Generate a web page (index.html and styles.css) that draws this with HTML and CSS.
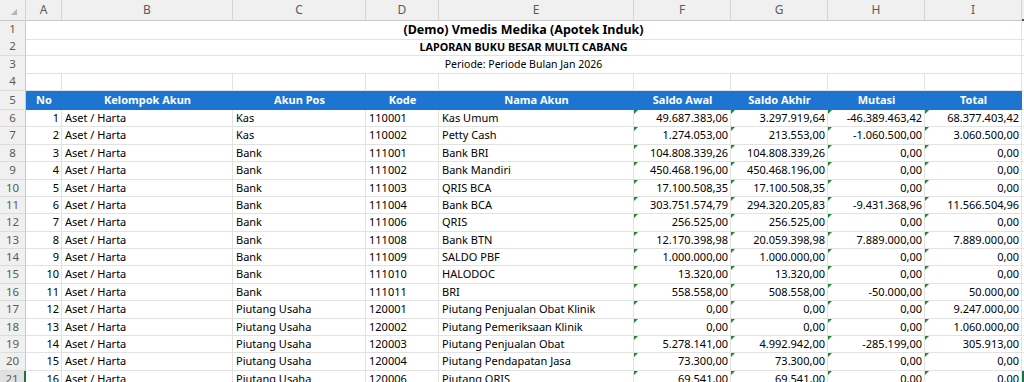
FILE: index.html
```html
<!DOCTYPE html>
<html>
<head>
<meta charset="utf-8">
<link rel="stylesheet" href="styles.css">
</head>
<body>
<div class="sheet">
  <div class="row colhead">
    <div class="corner"><svg width="8" height="8" viewBox="0 0 8 8"><polygon points="7,1 7,7 1,7" fill="#b4b4b4"/></svg></div>
    <div class="ch">A</div><div class="ch">B</div><div class="ch">C</div><div class="ch">D</div><div class="ch">E</div><div class="ch">F</div><div class="ch">G</div><div class="ch">H</div><div class="ch">I</div><div class="ch chj"></div>
  </div>

  <div class="row title"><div class="rh">1</div><div class="merged t1">(Demo) Vmedis Medika (Apotek Induk)</div><div class="c"></div></div>
  <div class="row title"><div class="rh">2</div><div class="merged t2">LAPORAN BUKU BESAR MULTI CABANG</div><div class="c"></div></div>
  <div class="row title"><div class="rh">3</div><div class="merged t3">Periode: Periode Bulan Jan 2026</div><div class="c"></div></div>
  <div class="row"><div class="rh">4</div><div class="c"></div><div class="c"></div><div class="c"></div><div class="c"></div><div class="c"></div><div class="c"></div><div class="c"></div><div class="c"></div><div class="c"></div><div class="c"></div></div>

  <div class="row thead">
    <div class="rh">5</div>
    <div class="th">No</div><div class="th">Kelompok Akun</div><div class="th">Akun Pos</div><div class="th">Kode</div><div class="th">Nama Akun</div><div class="th">Saldo Awal</div><div class="th">Saldo Akhir</div><div class="th">Mutasi</div><div class="th">Total</div><div class="c"></div>
  </div>

  <div class="row"><div class="rh">6</div><div class="c r">1</div><div class="c">Aset / Harta</div><div class="c">Kas</div><div class="c">110001</div><div class="c">Kas Umum</div><div class="c r m">49.687.383,06</div><div class="c r m">3.297.919,64</div><div class="c r m">-46.389.463,42</div><div class="c r m">68.377.403,42</div><div class="c"></div></div>
  <div class="row"><div class="rh">7</div><div class="c r">2</div><div class="c">Aset / Harta</div><div class="c">Kas</div><div class="c">110002</div><div class="c">Petty Cash</div><div class="c r m">1.274.053,00</div><div class="c r m">213.553,00</div><div class="c r m">-1.060.500,00</div><div class="c r m">3.060.500,00</div><div class="c"></div></div>
  <div class="row"><div class="rh">8</div><div class="c r">3</div><div class="c">Aset / Harta</div><div class="c">Bank</div><div class="c">111001</div><div class="c">Bank BRI</div><div class="c r m">104.808.339,26</div><div class="c r m">104.808.339,26</div><div class="c r m">0,00</div><div class="c r m">0,00</div><div class="c"></div></div>
  <div class="row"><div class="rh">9</div><div class="c r">4</div><div class="c">Aset / Harta</div><div class="c">Bank</div><div class="c">111002</div><div class="c">Bank Mandiri</div><div class="c r m">450.468.196,00</div><div class="c r m">450.468.196,00</div><div class="c r m">0,00</div><div class="c r m">0,00</div><div class="c"></div></div>
  <div class="row"><div class="rh">10</div><div class="c r">5</div><div class="c">Aset / Harta</div><div class="c">Bank</div><div class="c">111003</div><div class="c">QRIS BCA</div><div class="c r m">17.100.508,35</div><div class="c r m">17.100.508,35</div><div class="c r m">0,00</div><div class="c r m">0,00</div><div class="c"></div></div>
  <div class="row"><div class="rh">11</div><div class="c r">6</div><div class="c">Aset / Harta</div><div class="c">Bank</div><div class="c">111004</div><div class="c">Bank BCA</div><div class="c r m">303.751.574,79</div><div class="c r m">294.320.205,83</div><div class="c r m">-9.431.368,96</div><div class="c r m">11.566.504,96</div><div class="c"></div></div>
  <div class="row"><div class="rh">12</div><div class="c r">7</div><div class="c">Aset / Harta</div><div class="c">Bank</div><div class="c">111006</div><div class="c">QRIS</div><div class="c r m">256.525,00</div><div class="c r m">256.525,00</div><div class="c r m">0,00</div><div class="c r m">0,00</div><div class="c"></div></div>
  <div class="row"><div class="rh">13</div><div class="c r">8</div><div class="c">Aset / Harta</div><div class="c">Bank</div><div class="c">111008</div><div class="c">Bank BTN</div><div class="c r m">12.170.398,98</div><div class="c r m">20.059.398,98</div><div class="c r m">7.889.000,00</div><div class="c r m">7.889.000,00</div><div class="c"></div></div>
  <div class="row"><div class="rh">14</div><div class="c r">9</div><div class="c">Aset / Harta</div><div class="c">Bank</div><div class="c">111009</div><div class="c">SALDO PBF</div><div class="c r m">1.000.000,00</div><div class="c r m">1.000.000,00</div><div class="c r m">0,00</div><div class="c r m">0,00</div><div class="c"></div></div>
  <div class="row"><div class="rh">15</div><div class="c r">10</div><div class="c">Aset / Harta</div><div class="c">Bank</div><div class="c">111010</div><div class="c">HALODOC</div><div class="c r m">13.320,00</div><div class="c r m">13.320,00</div><div class="c r m">0,00</div><div class="c r m">0,00</div><div class="c"></div></div>
  <div class="row"><div class="rh">16</div><div class="c r">11</div><div class="c">Aset / Harta</div><div class="c">Bank</div><div class="c">111011</div><div class="c">BRI</div><div class="c r m">558.558,00</div><div class="c r m">508.558,00</div><div class="c r m">-50.000,00</div><div class="c r m">50.000,00</div><div class="c"></div></div>
  <div class="row"><div class="rh">17</div><div class="c r">12</div><div class="c">Aset / Harta</div><div class="c">Piutang Usaha</div><div class="c">120001</div><div class="c">Piutang Penjualan Obat Klinik</div><div class="c r m">0,00</div><div class="c r m">0,00</div><div class="c r m">0,00</div><div class="c r m">9.247.000,00</div><div class="c"></div></div>
  <div class="row"><div class="rh">18</div><div class="c r">13</div><div class="c">Aset / Harta</div><div class="c">Piutang Usaha</div><div class="c">120002</div><div class="c">Piutang Pemeriksaan Klinik</div><div class="c r m">0,00</div><div class="c r m">0,00</div><div class="c r m">0,00</div><div class="c r m">1.060.000,00</div><div class="c"></div></div>
  <div class="row"><div class="rh">19</div><div class="c r">14</div><div class="c">Aset / Harta</div><div class="c">Piutang Usaha</div><div class="c">120003</div><div class="c">Piutang Penjualan Obat</div><div class="c r m">5.278.141,00</div><div class="c r m">4.992.942,00</div><div class="c r m">-285.199,00</div><div class="c r m">305.913,00</div><div class="c"></div></div>
  <div class="row"><div class="rh">20</div><div class="c r">15</div><div class="c">Aset / Harta</div><div class="c">Piutang Usaha</div><div class="c">120004</div><div class="c">Piutang Pendapatan Jasa</div><div class="c r m">73.300,00</div><div class="c r m">73.300,00</div><div class="c r m">0,00</div><div class="c r m">0,00</div><div class="c"></div></div>
  <div class="row"><div class="rh sel">21</div><div class="c r">16</div><div class="c">Aset / Harta</div><div class="c">Piutang Usaha</div><div class="c">120006</div><div class="c">Piutang QRIS</div><div class="c r m">69.541,00</div><div class="c r m">69.541,00</div><div class="c r m">0,00</div><div class="c r m">0,00</div><div class="c active"></div></div>
</div>
</body>
</html>
```

FILE: styles.css
```css
* { box-sizing: border-box; }
html, body { margin: 0; padding: 0; background: #ffffff; }
body {
  font-family: "Noto Sans", "Open Sans", sans-serif;
  font-size: 11px;
  color: #000;
  overflow: hidden;
  width: 1024px;
  height: 382px;
}
.sheet { display: flex; flex-direction: column; }
.row {
  display: grid;
  grid-template-columns: 26px 36px 171px 133px 73px 195px 97px 97px 97px 97px 2px;
  height: 17.4px;
  line-height: 16.4px;
}
.colhead { height: 21px; line-height: 20px; }
.corner, .ch {
  background: #f0f0f0;
  border-bottom: 1px solid #c9c9c9;
  border-right: 1px solid #d4d4d4;
}
.corner { display: flex; align-items: flex-end; justify-content: flex-end; padding: 0 7px 4px 0; }
.corner svg { display: block; }
.ch { color: #5b5b5b; text-align: center; font-size: 12px; }
.chj { border-right: none; border-bottom: 2px solid #1e7145; }
.rh {
  background: #f0f0f0;
  color: #5b5b5b;
  text-align: center;
  border-right: 1px solid #c9c9c9;
  border-bottom: 1px solid #dcdcdc;
  font-size: 11.5px;
}
.rh.sel { background: #e1e1e1; border-right: 2px solid #1e7145; }
.c {
  position: relative;
  border-right: 1px solid #e2e2e2;
  border-bottom: 1px solid #e2e2e2;
  padding: 0 2px 0 3px;
  white-space: nowrap;
  overflow: hidden;
}
.c.r { text-align: right; padding: 0 2px 0 2px; }
.c.m::before {
  content: "";
  position: absolute;
  left: 0;
  top: 0;
  border-top: 4px solid #1e8a2e;
  border-right: 4px solid transparent;
}
.c.active { border-right: none; background: #1e7145; }
.title .merged {
  grid-column: 2 / 11;
  border-right: 1px solid #e2e2e2;
  border-bottom: 1px solid #e2e2e2;
  text-align: center;
  white-space: nowrap;
}
.t1 { font-weight: 700; font-size: 12.5px; line-height: 18px; }
.t2 { font-weight: 700; font-size: 10.8px; line-height: 17px; }
.t3 { font-size: 10.5px; line-height: 17px; }
.thead { height: 19.4px; line-height: 18.4px; }
.th {
  background: #1e75d1;
  color: #ffffff;
  font-weight: 700;
  text-align: center;
  white-space: nowrap;
  border-bottom: 1px solid #1e75d1;
}
```
